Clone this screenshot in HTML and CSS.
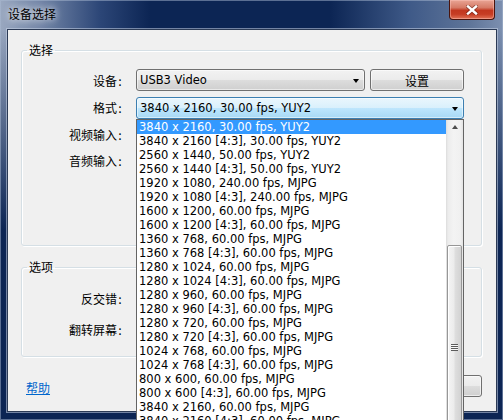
FILE: index.html
```html
<!DOCTYPE html>
<html lang="zh-CN">
<head>
    <meta charset="UTF-8">
    <title>设备选择</title>
    <link rel="stylesheet" href="styles.css">
</head>
<body>

<div class="window">
    <div class="titlebar">
        <span class="title">设备选择</span>
        <div class="close-btn">
            <svg width="12" height="10" viewBox="0 0 12 10">
                <path d="M2 1.5 L10 8.5 M10 1.5 L2 8.5" stroke="#5a1a10" stroke-width="4" stroke-linecap="square" opacity="0.55"/>
                <path d="M2 1.5 L10 8.5 M10 1.5 L2 8.5" stroke="#ffffff" stroke-width="2.4" stroke-linecap="square"/>
            </svg>
        </div>
    </div>

    <div class="client">
        <fieldset class="group group-select">
            <legend>选择</legend>
            <div class="form-grid">
                <label class="cap">设备:</label>
                <div class="device-row">
                    <div class="combo"><span class="combo-text">USB3 Video</span><span class="arrow"></span></div>
                    <button class="btn">设置</button>
                </div>

                <label class="cap">格式:</label>
                <div class="combo combo-focus format-combo">
                    <span class="combo-text">3840 x 2160, 30.00 fps, YUY2</span><span class="arrow"></span>

                    <!-- opened drop-down of the format combo -->
                    <div class="dropdown">
                        <ul class="options">
                            <li class="selected">3840 x 2160, 30.00 fps, YUY2</li>
                            <li>3840 x 2160 [4:3], 30.00 fps, YUY2</li>
                            <li>2560 x 1440, 50.00 fps, YUY2</li>
                            <li>2560 x 1440 [4:3], 50.00 fps, YUY2</li>
                            <li>1920 x 1080, 240.00 fps, MJPG</li>
                            <li>1920 x 1080 [4:3], 240.00 fps, MJPG</li>
                            <li>1600 x 1200, 60.00 fps, MJPG</li>
                            <li>1600 x 1200 [4:3], 60.00 fps, MJPG</li>
                            <li>1360 x 768, 60.00 fps, MJPG</li>
                            <li>1360 x 768 [4:3], 60.00 fps, MJPG</li>
                            <li>1280 x 1024, 60.00 fps, MJPG</li>
                            <li>1280 x 1024 [4:3], 60.00 fps, MJPG</li>
                            <li>1280 x 960, 60.00 fps, MJPG</li>
                            <li>1280 x 960 [4:3], 60.00 fps, MJPG</li>
                            <li>1280 x 720, 60.00 fps, MJPG</li>
                            <li>1280 x 720 [4:3], 60.00 fps, MJPG</li>
                            <li>1024 x 768, 60.00 fps, MJPG</li>
                            <li>1024 x 768 [4:3], 60.00 fps, MJPG</li>
                            <li>800 x 600, 60.00 fps, MJPG</li>
                            <li>800 x 600 [4:3], 60.00 fps, MJPG</li>
                            <li>3840 x 2160, 60.00 fps, MJPG</li>
                            <li>3840 x 2160 [4:3], 60.00 fps, MJPG</li>
                        </ul>
                        <div class="scrollbar">
                            <div class="scroll-up"><span class="up-arrow"></span></div>
                            <div class="thumb"><span class="grip"></span></div>
                        </div>
                    </div>
                </div>

                <label class="cap">视频输入:</label>
                <div class="combo"><span class="combo-text"></span><span class="arrow"></span></div>

                <label class="cap">音频输入:</label>
                <div class="combo"><span class="combo-text"></span><span class="arrow"></span></div>
            </div>
        </fieldset>

        <fieldset class="group group-options">
            <legend>选项</legend>
            <div class="form-grid options-grid">
                <label class="cap">反交错:</label>
                <div class="combo"><span class="combo-text"></span><span class="arrow"></span></div>

                <label class="cap">翻转屏幕:</label>
                <div class="combo"><span class="combo-text"></span><span class="arrow"></span></div>
            </div>
        </fieldset>

        <div class="footer">
            <a href="#" class="help">帮助</a>
            <div class="buttons">
                <button class="btn">确定</button>
                <button class="btn">取消</button>
            </div>
        </div>
    </div>
</div>

</body>
</html>
```

FILE: styles.css
```css
html, body {
    margin: 0;
    height: 100%;
    overflow: hidden;
}

body {
    font-family: "DejaVu Sans", sans-serif;
    font-size: 11.5px;
    background: #0c2554;
}

/* window frame */
.window {
    height: 420px;
    display: flex;
    flex-direction: column;
    background:
        linear-gradient(to bottom, rgba(12,37,84,0) 30px, #0c2554 230px),
        linear-gradient(to right, #9aa8c0 0, #7487a8 40px, #2c4677 100px, #0c2554 150px, #0c2554 330px, #3f5a88 410px, #5f7599 470px, #7d90b0 503px);
    box-shadow: inset 0 0 0 1px rgba(170,185,210,0.5);
}

.titlebar {
    height: 29px;
    display: flex;
    justify-content: space-between;
    align-items: flex-start;
    padding: 0 8px 0 8px;
    flex-shrink: 0;
}

.title {
    font-family: "Noto Sans CJK SC", sans-serif;
    font-size: 12px;
    line-height: 14px;
    padding-top: 7px;
    color: #000;
    text-shadow: 0 0 6px rgba(255,255,255,0.9), 0 0 10px rgba(255,255,255,0.6);
}

.close-btn {
    width: 44px;
    height: 19px;
    border: 1px solid #4a140c;
    border-top: none;
    border-radius: 0 0 4px 4px;
    background: linear-gradient(to bottom, #e9a595 0, #d67a66 40%, #c2371f 55%, #c63d24 75%, #e07256 100%);
    box-shadow: inset 0 0 0 1px rgba(255,200,190,0.45);
    display: flex;
    align-items: center;
    justify-content: center;
}

/* client area */
.client {
    flex: 1;
    margin: 0 6px 8px 7px;
    background: #f0f0f0;
    border: 1px solid #2b3a55;
    box-shadow: 0 0 0 1px rgba(200,212,230,0.55);
    padding: 0 14px 0 13px;
    display: flex;
    flex-direction: column;
}

.cap {
    font-family: "Noto Sans Mono CJK SC", "Noto Sans CJK SC", sans-serif;
    font-size: 12px;
    color: #000;
    text-align: right;
}

/* group boxes */
.group {
    margin: 0;
    padding: 0 16px 0 11px;
    border: 1px solid #d5dfe5;
    border-radius: 3px;
    box-shadow: inset 1px 1px 0 #fff, 1px 1px 0 #fff;
    box-sizing: border-box;
    min-width: 0;
}

.group legend {
    font-family: "Noto Sans CJK SC", sans-serif;
    font-size: 12px;
    line-height: 14px;
    padding: 0 2px;
    margin-left: -6px;
    color: #000;
}

.group-select {
    margin-top: 13px;
    height: 203px;
    padding-top: 12px;
}

.group-options {
    margin-top: 14px;
    height: 97px;
    padding-top: 13px;
}

.form-grid {
    display: grid;
    grid-template-columns: 90px 328px;
    grid-template-rows: 22px 24px 22px 22px;
    column-gap: 13px;
    row-gap: 4px;
    align-items: center;
}

.options-grid {
    grid-template-rows: 22px 22px;
    row-gap: 9px;
}

.format-combo {
    align-self: end;
}

.device-row {
    display: flex;
    gap: 5px;
    height: 22px;
}

/* combo boxes & buttons */
.combo {
    position: relative;
    height: 22px;
    box-sizing: border-box;
    border: 1px solid #707070;
    border-radius: 3px;
    background: linear-gradient(to bottom, #f2f2f2 0, #ebebeb 50%, #dddddd 51%, #cfcfcf 100%);
    box-shadow: inset 0 0 0 1px rgba(255,255,255,0.55);
    display: flex;
    align-items: center;
    padding: 0 5px 0 3px;
    flex: 1;
}

.combo-text {
    flex: 1;
    white-space: nowrap;
    overflow: hidden;
    color: #000;
}

.arrow {
    width: 0;
    height: 0;
    border-left: 3.5px solid transparent;
    border-right: 3.5px solid transparent;
    border-top: 4px solid #000;
    margin-top: 1px;
}

.combo-focus {
    border-color: #3c7fb1;
    background: linear-gradient(to bottom, #eaf6fd 0, #d9f0fc 50%, #bee6fd 51%, #a7d9f5 100%);
    box-shadow: inset 0 0 0 1px rgba(255,255,255,0.5);
}

.btn {
    width: 94px;
    height: 22px;
    padding: 0;
    border: 1px solid #707070;
    border-radius: 3px;
    background: linear-gradient(to bottom, #f2f2f2 0, #ebebeb 50%, #dddddd 51%, #cfcfcf 100%);
    box-shadow: inset 0 0 0 1px rgba(255,255,255,0.6);
    font-family: "Noto Sans CJK SC", sans-serif;
    font-size: 12px;
    color: #000;
}

/* drop-down list */
.dropdown {
    position: absolute;
    top: 21px;
    left: -1px;
    width: 328px;
    height: 312px;
    box-sizing: border-box;
    border: 1px solid #646464;
    background: #fff;
    display: flex;
    z-index: 10;
}

.options {
    list-style: none;
    margin: 0;
    padding: 0;
    flex: 1;
    min-width: 0;
}

.options li {
    height: 14px;
    line-height: 14px;
    padding-left: 2px;
    white-space: nowrap;
    overflow: hidden;
    color: #000;
}

.options li.selected {
    background: #3399ff;
    color: #fff;
}

.scrollbar {
    width: 17px;
    background: linear-gradient(to right, #dcdcdc 0, #ececec 2px, #f3f3f3 45%, #f0f0f0 85%, #e4e4e4 100%);
    display: flex;
    flex-direction: column;
    align-items: center;
}

.scroll-up {
    height: 17px;
    width: 17px;
    display: flex;
    align-items: center;
    justify-content: center;
}

.up-arrow {
    width: 0;
    height: 0;
    border-left: 3.5px solid transparent;
    border-right: 3.5px solid transparent;
    border-bottom: 4px solid #4d4d4d;
}

.thumb {
    margin-top: 111px;
    width: 15px;
    height: 200px;
    box-sizing: border-box;
    border: 1px solid #979797;
    border-radius: 2px;
    background: linear-gradient(to right, #f4f4f4 0, #ececec 45%, #dedede 55%, #d2d2d2 100%);
    box-shadow: inset 1px 1px 0 #fff;
    display: flex;
    justify-content: center;
    padding-top: 98px;
}

.grip {
    width: 7px;
    height: 7px;
    background: repeating-linear-gradient(to bottom, #5c5c5c 0, #5c5c5c 1px, #f8f8f8 1px, #f8f8f8 2px);
}

/* bottom row */
.footer {
    margin-top: 18px;
    display: flex;
    justify-content: space-between;
    align-items: flex-start;
    padding-left: 5px;
}

.help {
    font-family: "Noto Sans CJK SC", sans-serif;
    font-size: 12px;
    line-height: 14px;
    margin-top: 6px;
    color: #0066cc;
}

.buttons {
    display: flex;
    gap: 6px;
}

.buttons .btn {
    width: 75px;
}
```
